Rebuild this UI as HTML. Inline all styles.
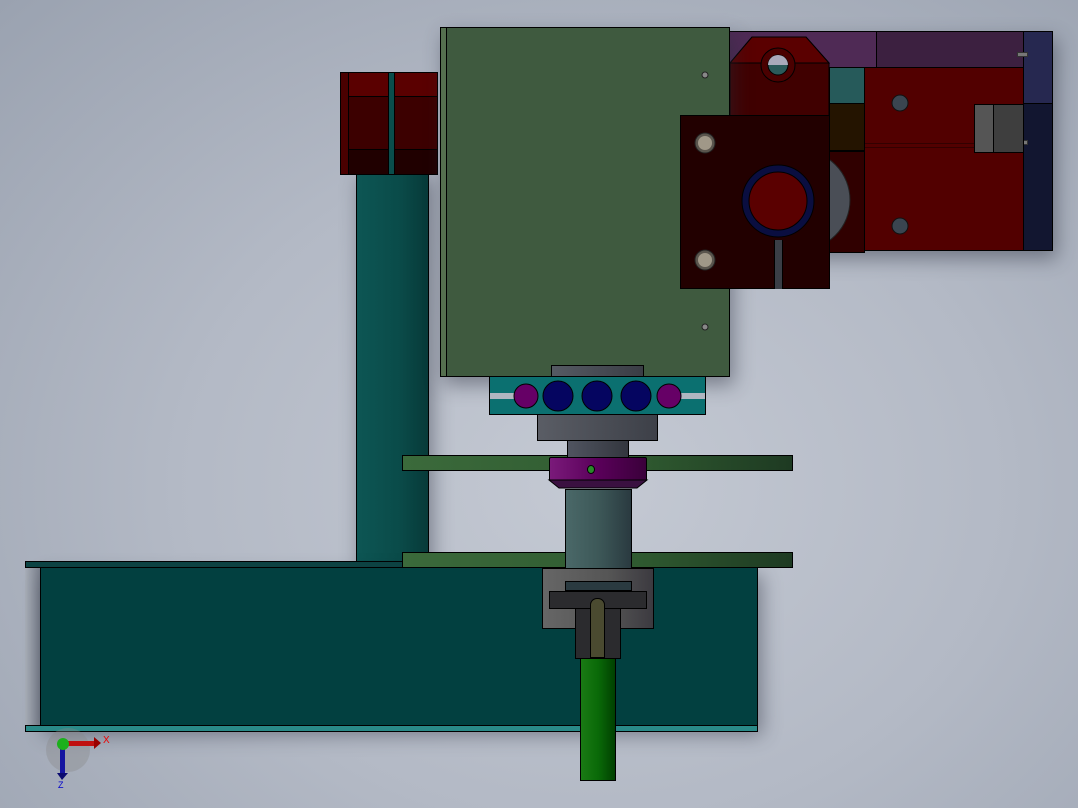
<!DOCTYPE html>
<html><head><meta charset="utf-8"><style>
*{margin:0;padding:0;box-sizing:border-box}
body{width:1078px;height:808px;overflow:hidden;position:relative;background:radial-gradient(ellipse at 55% 60%,#c4c9d3 0%,#b3b9c5 50%,#9aa2b0 100%);font-family:"Liberation Sans",sans-serif}
.a{position:absolute}
.b{border:1px solid #000}
.sh{box-shadow:4px 8px 18px rgba(40,45,60,.45)}
</style></head><body>
<div class="a b sh" style="left:356px;top:170px;width:73px;height:394px;background:linear-gradient(90deg,#0d5654,#0a4b49 60%,#073a39)"></div>
<div class="a b" style="left:340px;top:72px;width:98px;height:103px;background:#3c0000"></div>
<div class="a" style="left:341px;top:73px;width:96px;height:24px;background:#5a0000;border-bottom:1px solid #000"></div>
<div class="a" style="left:341px;top:149px;width:96px;height:25px;background:#200000;border-top:1px solid #000"></div>
<div class="a" style="left:341px;top:73px;width:8px;height:101px;background:#4a0000;border-right:1px solid #000"></div>
<div class="a" style="left:388px;top:73px;width:7px;height:101px;background:#0a4d4b;border-left:1px solid #000;border-right:1px solid #000"></div>
<div class="a sh" style="left:729px;top:31px;width:324px;height:220px"></div>
<div class="a b" style="left:729px;top:31px;width:148px;height:37px;background:#4f2a55"></div>
<div class="a b" style="left:876px;top:31px;width:148px;height:37px;background:#3c2040"></div>
<div class="a b" style="left:1023px;top:31px;width:30px;height:73px;background:#262850"></div>
<div class="a b" style="left:1023px;top:103px;width:30px;height:148px;background:#121630"></div>
<div class="a" style="left:1017px;top:52px;width:11px;height:5px;background:#777;border:1px solid #333"></div>
<div class="a" style="left:1017px;top:140px;width:11px;height:5px;background:#777;border:1px solid #333"></div>
<div class="a b" style="left:864px;top:67px;width:160px;height:184px;background:#520000"></div>
<div class="a" style="left:865px;top:143px;width:110px;height:5px;border-top:1px solid #300;border-bottom:1px solid #300"></div>
<div class="a b" style="left:974px;top:104px;width:50px;height:49px;background:#3e3e3e"></div>
<div class="a" style="left:975px;top:105px;width:19px;height:47px;background:#555;border-right:1px solid #000"></div>
<div class="a b" style="left:829px;top:67px;width:36px;height:37px;background:#265a5a"></div>
<div class="a b" style="left:829px;top:103px;width:36px;height:48px;background:#241400"></div>
<div class="a b" style="left:829px;top:151px;width:36px;height:102px;background:#300000"></div>
<svg class="a" style="left:0;top:0" width="1078" height="808">
<path d="M800 150 A50 50 0 0 1 800 250 Z" fill="#4a4e56" stroke="#222"/>
<circle cx="900" cy="103" r="8" fill="#3a4550" stroke="#111"/>
<circle cx="900" cy="226" r="8" fill="#3a4550" stroke="#111"/>
<polygon points="730,63 752,37 806,37 829,63 829,116 730,116" fill="#400000" stroke="#000"/>
<polygon points="752,37 806,37 829,63 730,63" fill="#5a0000" stroke="#000"/>
<circle cx="778" cy="65" r="17" fill="#4a0000" stroke="#000"/>
<circle cx="778" cy="65" r="10" fill="#2b5a5a" stroke="#000"/>
<path d="M768 65 A10 10 0 0 1 788 65 Z" fill="#aab" />
</svg>
<div class="a b sh" style="left:440px;top:27px;width:290px;height:350px;background:#3f5a3f"></div>
<div class="a" style="left:441px;top:28px;width:6px;height:348px;background:#55704f;border-right:1px solid #000"></div>
<div class="a b" style="left:680px;top:115px;width:150px;height:174px;background:#220000"></div>
<div class="a" style="left:774px;top:240px;width:9px;height:49px;background:#3a3e46;border-left:1px solid #000;border-right:1px solid #000"></div>
<svg class="a" style="left:0;top:0" width="1078" height="808">
<circle cx="778" cy="201" r="36" fill="#0a0e40" stroke="#000"/>
<circle cx="778" cy="201" r="29" fill="#5a0000" stroke="#000"/>
<circle cx="705" cy="143" r="10" fill="#5a554d" stroke="#222"/>
<circle cx="705" cy="143" r="7" fill="#a09888"/>
<circle cx="705" cy="260" r="10" fill="#5a554d" stroke="#222"/>
<circle cx="705" cy="260" r="7" fill="#a09888"/>
<circle cx="705" cy="75" r="3" fill="#888" stroke="#222"/>
<circle cx="705" cy="327" r="3" fill="#888" stroke="#222"/>
</svg>
<div class="a" style="left:25px;top:567px;width:15px;height:160px;background:linear-gradient(90deg,#a8aeb8,#7c828e)"></div>
<div class="a" style="left:25px;top:561px;width:733px;height:7px;background:#0c4444;border:1px solid #000"></div>
<div class="a b" style="left:40px;top:567px;width:718px;height:160px;background:#024040;box-shadow:4px 8px 18px rgba(40,45,60,.45)"></div>
<div class="a" style="left:25px;top:725px;width:733px;height:7px;background:#2a8a88;border:1px solid #000"></div>
<div class="a b" style="left:402px;top:455px;width:391px;height:16px;background:linear-gradient(90deg,#3b6a3b,#2f5a30 60%,#1e3a22)"></div>
<div class="a b" style="left:402px;top:552px;width:391px;height:16px;background:linear-gradient(90deg,#3b6a3b,#2f5a30 60%,#1e3a22)"></div>
<div class="a b" style="left:551px;top:365px;width:93px;height:13px;background:linear-gradient(90deg,#555a63,#3a3d45)"></div>
<div class="a b" style="left:489px;top:376px;width:217px;height:39px;background:#0b7070"></div>
<div class="a" style="left:490px;top:393px;width:24px;height:6px;background:#b0b6c0"></div>
<div class="a" style="left:681px;top:393px;width:24px;height:6px;background:#b0b6c0"></div>
<svg class="a" style="left:0;top:0" width="1078" height="808">
<circle cx="526" cy="396" r="12" fill="#660066" stroke="#000"/>
<circle cx="558" cy="396" r="15" fill="#050560" stroke="#000"/>
<circle cx="597" cy="396" r="15" fill="#050560" stroke="#000"/>
<circle cx="636" cy="396" r="15" fill="#050560" stroke="#000"/>
<circle cx="669" cy="396" r="12" fill="#660066" stroke="#000"/>
</svg>
<div class="a b" style="left:537px;top:414px;width:121px;height:27px;background:linear-gradient(90deg,#5a5d65,#3d4048)"></div>
<div class="a b" style="left:567px;top:440px;width:62px;height:18px;background:linear-gradient(90deg,#505460,#33363e)"></div>
<div class="a b" style="left:549px;top:457px;width:98px;height:24px;background:linear-gradient(90deg,#7a1a7a,#5a005a 50%,#3a003a);border-radius:2px"></div>
<svg class="a" style="left:0;top:0" width="1078" height="808">
<polygon points="549,480 647,480 637,488 559,488" fill="#3a1040" stroke="#000"/>
</svg>
<div class="a" style="left:587px;top:465px;width:8px;height:9px;border-radius:50%;background:#2a8a2a;border:1px solid #000"></div>
<div class="a b" style="left:565px;top:489px;width:67px;height:93px;background:linear-gradient(90deg,#4a6868,#3d5858 50%,#2a3a40)"></div>
<div class="a b" style="left:542px;top:568px;width:112px;height:61px;background:linear-gradient(90deg,#666,#555 60%,#3c3a40)"></div>
<div class="a b" style="left:565px;top:581px;width:67px;height:10px;background:#2a3a40"></div>
<div class="a b" style="left:549px;top:591px;width:98px;height:18px;background:#2b2b2e"></div>
<div class="a b" style="left:575px;top:608px;width:46px;height:51px;background:#2b2b2e"></div>
<div class="a" style="left:590px;top:598px;width:15px;height:60px;background:#4a4a30;border:1px solid #000;border-radius:7px 7px 0 0"></div>
<div class="a b" style="left:580px;top:658px;width:36px;height:123px;background:linear-gradient(90deg,#1a7a14,#0a6a08 50%,#004000)"></div>
<svg class="a" style="left:0;top:0" width="1078" height="808">
<circle cx="68" cy="750" r="22" fill="#888" opacity=".35"/>
<rect x="64" y="741" width="32" height="5" fill="#c01010"/>
<polygon points="94,737 101,743 94,749" fill="#900"/>
<text x="103" y="743" font-size="10" fill="#e00" font-family="Liberation Sans">X</text>
<rect x="60" y="744" width="5" height="30" fill="#1515a0"/>
<polygon points="57,773 68,773 62,780" fill="#0a0a70"/>
<text x="58" y="788" font-size="9" fill="#00c" font-family="Liberation Sans">Z</text>
<circle cx="63" cy="744" r="6" fill="#1cb01c"/>
</svg>
</body></html>
